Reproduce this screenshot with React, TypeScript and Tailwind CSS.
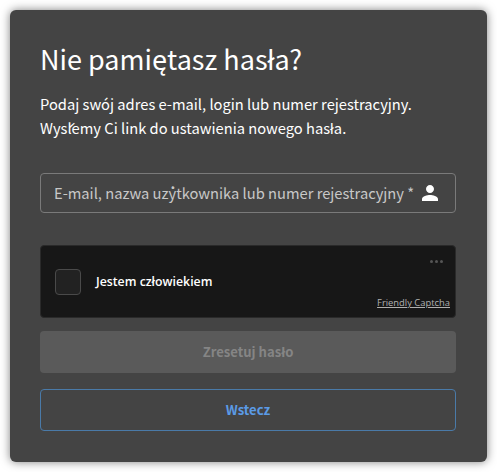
const sourceFont = "font-['Noto_Sans_CJK_SC','Noto_Sans',sans-serif]";

const PersonIcon = () => (
  <svg viewBox="0 0 24 24" className="h-[24px] w-[24px] shrink-0 fill-white">
    <path d="M12 12c2.21 0 4-1.79 4-4s-1.79-4-4-4-4 1.79-4 4 1.79 4 4 4zm0 2c-2.67 0-8 1.34-8 4v2h16v-2c0-2.66-5.33-4-8-4z" />
  </svg>
);

const Captcha = () => (
  <div className="relative flex h-[73px] items-center rounded-[4px] border border-[#2a2a2a] bg-[#171717] pl-[14px] font-['Open_Sans',sans-serif]">
    <div className="h-[26px] w-[26px] rounded-[4px] border border-[#4a4a4a] bg-[#222222]" />
    <span className="mt-[1px] ml-[15px] text-[12.3px] font-semibold text-white">Jestem człowiekiem</span>
    <div className="absolute top-[14px] right-[12px] flex gap-[2px]">
      <span className="h-[3px] w-[3px] rounded-full bg-[#555555]" />
      <span className="h-[3px] w-[3px] rounded-full bg-[#555555]" />
      <span className="h-[3px] w-[3px] rounded-full bg-[#555555]" />
    </div>
    <a className="absolute right-[5px] bottom-[8px] text-[9.4px] leading-[12px] text-[#b0b0b0] underline">Friendly Captcha</a>
  </div>
);

export default function App() {
  return (
    <div className={`h-[472px] w-[497px] bg-white p-[10px] ${sourceFont}`}>
      <div className="flex h-[452px] w-[477px] flex-col rounded-[6px] bg-[#444444] pt-[29px] pr-[31px] pl-[30px] shadow-[0_0_10px_rgba(0,0,0,0.5)]">
        <h1 className="text-[27px] leading-[40px] text-white">Nie pamiętasz hasła?</h1>
        <p className="mt-[13px] text-[14.7px] leading-[24px] text-white">
          Podaj swój adres e-mail, login lub numer rejestracyjny.
          <br />
          Wyślemy Ci link do ustawienia nowego hasła.
        </p>
        <div className="mt-[33px] flex h-[40px] items-center justify-between rounded-[4px] border border-[#7a7a7a] px-[13px]">
          <span className="text-[14.7px] whitespace-nowrap text-[#c8c8c8]">E-mail, nazwa użytkownika lub numer rejestracyjny *</span>
          <PersonIcon />
        </div>
        <div className="mt-[32px]">
          <Captcha />
        </div>
        <button className="mt-[13px] h-[42px] rounded-[4px] bg-[#5a5a5a] text-[13.1px] font-bold text-[#858585]">Zresetuj hasło</button>
        <button className="mt-[16px] h-[42px] rounded-[4px] border border-[#4a7aa8] text-[13.1px] font-bold text-[#5b9be6]">Wstecz</button>
      </div>
    </div>
  );
}
